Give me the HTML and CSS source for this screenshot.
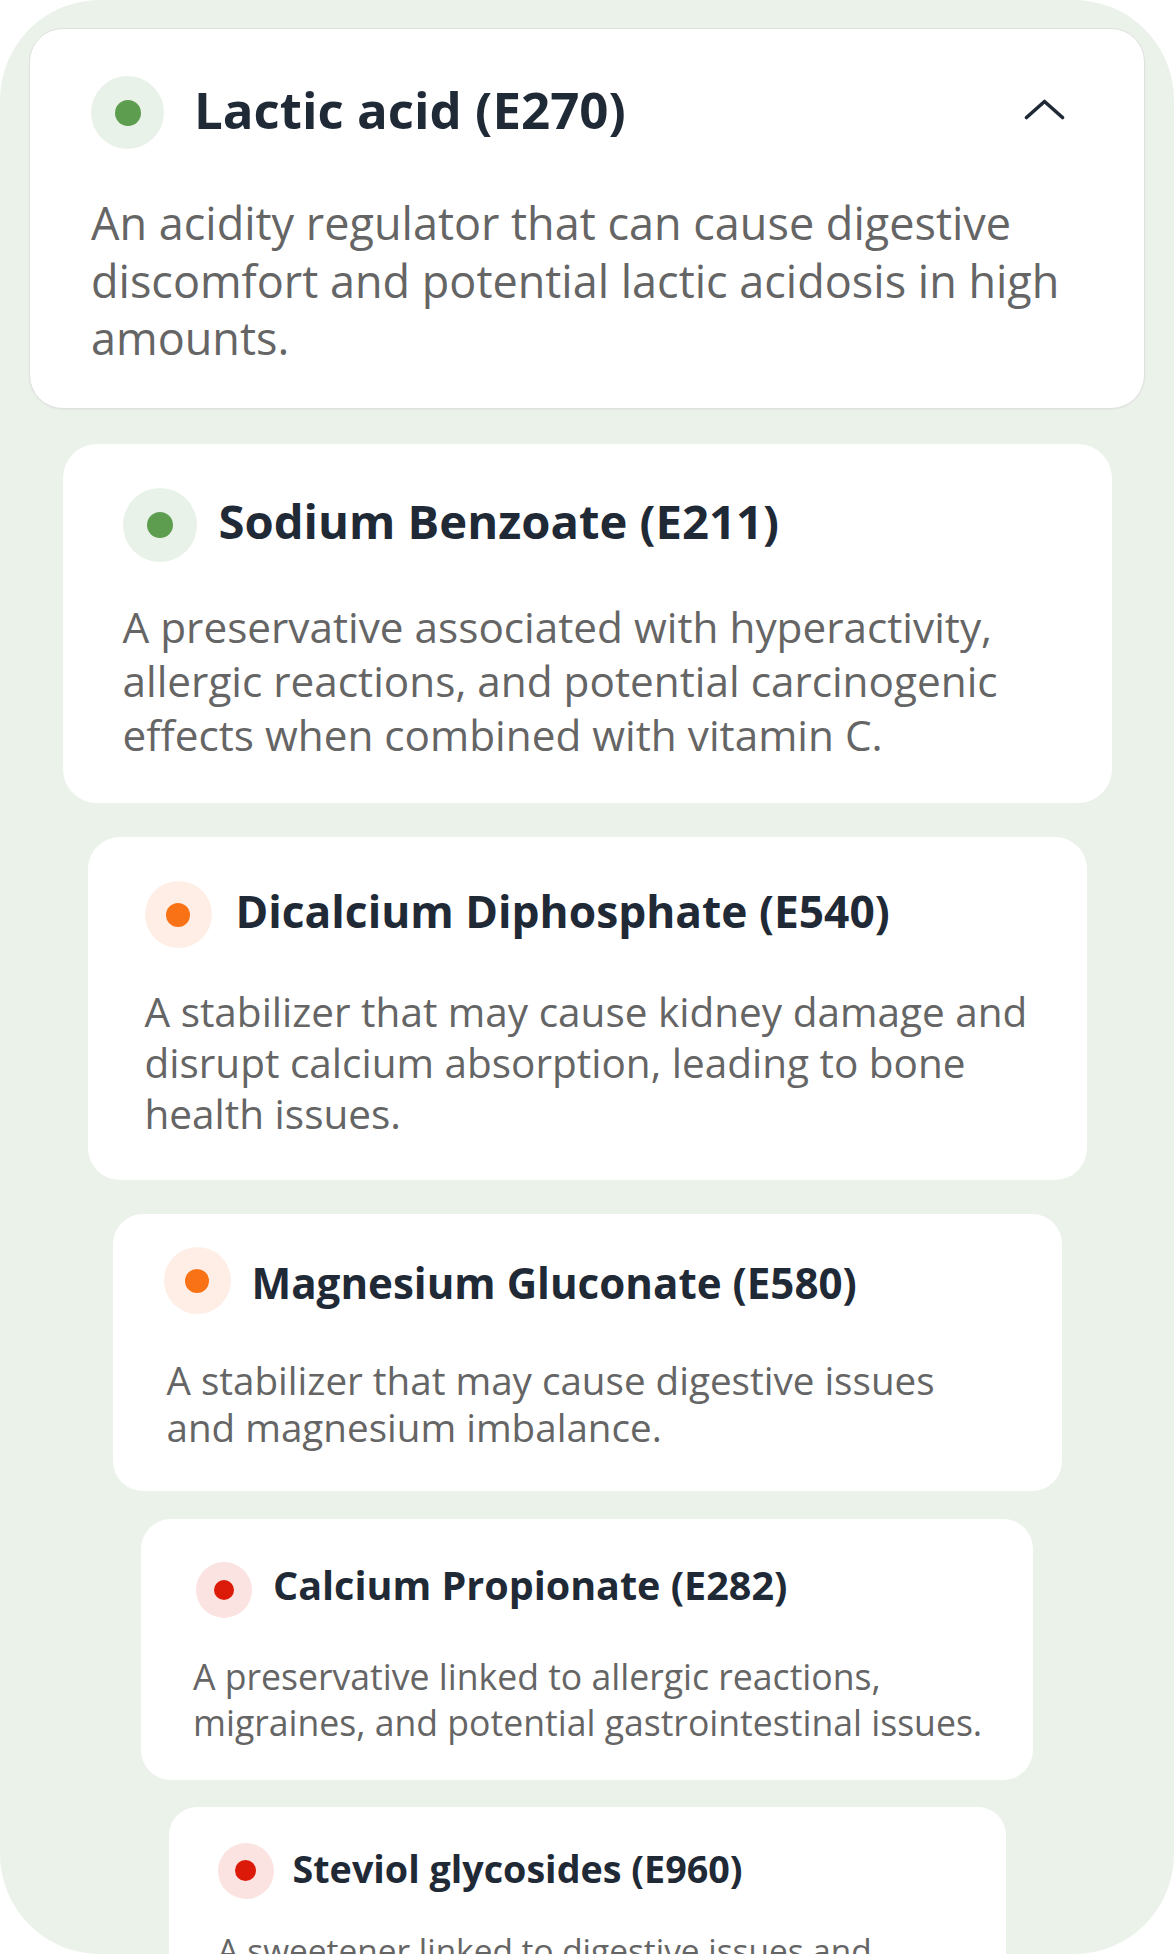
FILE: index.html
```html
<!DOCTYPE html>
<html lang="en">
<head>
<meta charset="utf-8">
<title>Additives</title>
<link rel="stylesheet" href="styles.css">
</head>
<body>
<main class="panel">
  <article class="card card--1 card--open">
    <div class="card__head">
      <span class="dot dot--green"></span>
      <h3 class="card__title">Lactic acid (E270)</h3>
      <svg class="chev" viewBox="0 0 41 21" width="41" height="21" aria-hidden="true"><polyline points="2.5,18.5 20.5,2.5 38.5,18.5" fill="none" stroke="#1f2a36" stroke-width="3.6" stroke-linecap="round" stroke-linejoin="round"/></svg>
    </div>
    <p class="card__desc">An acidity regulator that can cause digestive discomfort and potential lactic acidosis in high amounts.</p>
  </article>

  <article class="card card--2">
    <div class="card__head">
      <span class="dot dot--green"></span>
      <h3 class="card__title">Sodium Benzoate (E211)</h3>
    </div>
    <p class="card__desc">A preservative associated with hyperactivity, allergic reactions, and potential carcinogenic effects when combined with vitamin C.</p>
  </article>

  <article class="card card--3">
    <div class="card__head">
      <span class="dot dot--orange"></span>
      <h3 class="card__title">Dicalcium Diphosphate (E540)</h3>
    </div>
    <p class="card__desc">A stabilizer that may cause kidney damage and disrupt calcium absorption, leading to bone health issues.</p>
  </article>

  <article class="card card--4">
    <div class="card__head">
      <span class="dot dot--orange"></span>
      <h3 class="card__title">Magnesium Gluconate (E580)</h3>
    </div>
    <p class="card__desc">A stabilizer that may cause digestive issues and magnesium imbalance.</p>
  </article>

  <article class="card card--5">
    <div class="card__head">
      <span class="dot dot--red"></span>
      <h3 class="card__title">Calcium Propionate (E282)</h3>
    </div>
    <p class="card__desc">A preservative linked to allergic reactions, migraines, and potential gastrointestinal issues.</p>
  </article>

  <article class="card card--6">
    <div class="card__head">
      <span class="dot dot--red"></span>
      <h3 class="card__title">Steviol glycosides (E960)</h3>
    </div>
    <p class="card__desc">A sweetener linked to digestive issues and potential effects on blood sugar levels.</p>
  </article>
</main>
</body>
</html>
```
FILE: styles.css
```css
html, body {
  margin: 0;
  padding: 0;
  background: #ffffff;
}

body {
  font-family: "Open Sans", "Noto Sans", sans-serif;
}

.panel {
  height: 1954px;
  box-sizing: border-box;
  padding-top: 28px;
  background: #eaf2ea;
  border-radius: 100px;
  overflow: hidden;
  display: flex;
  flex-direction: column;
}

.card {
  box-sizing: border-box;
  flex: none;
  width: var(--w);
  margin: var(--mt) auto 0;
  padding: var(--pt) var(--pr) var(--pb) var(--pl);
  background: #ffffff;
  border-radius: var(--r);
}

.card--open {
  border: 1px solid #e0e0e0;
  box-shadow: 0 1px 2px rgba(0, 0, 0, 0.04);
}

.card__head {
  display: flex;
  align-items: center;
  gap: var(--tgap);
}

.dot {
  flex: none;
  width: var(--icon);
  height: var(--icon);
  margin-left: var(--iml, 0px);
  border-radius: 50%;
  display: flex;
  align-items: center;
  justify-content: center;
}

.dot::after {
  content: "";
  width: var(--dot);
  height: var(--dot);
  border-radius: 50%;
}

.dot--green { background: #e9f2e8; }
.dot--green::after { background: #5d9d4f; }
.dot--orange { background: #ffeee6; }
.dot--orange::after { background: #f97316; }
.dot--red { background: #fbe3e1; }
.dot--red::after { background: #dc1a0a; }

.card__title {
  margin: var(--tmt, 0px) 0 var(--tmb, 0px);
  font-size: var(--tfs);
  line-height: 1.2;
  font-weight: 700;
  color: #1f2a36;
  white-space: nowrap;
}

.chev {
  flex: none;
  margin-left: auto;
  margin-right: 18px;
  margin-bottom: 7px;
}

.card__desc {
  margin: var(--gap) 0 0;
  font-size: var(--dfs);
  line-height: var(--dlh);
  font-weight: 400;
  color: #656565;
}

.card--1 {
  --w: 1116px; --mt: 0px; --r: 34px;
  --pt: 47px; --pb: 41px; --pl: 61px; --pr: 61px;
  --icon: 73px; --dot: 26px; --tgap: 30px; --tfs: 51px; --tmb: 5px;
  --gap: 45px; --dfs: 45px; --dlh: 57.5px;
}

.card--2 {
  --w: 1049px; --mt: 35px; --r: 34px;
  --pt: 44px; --pb: 41px; --pl: 60px; --pr: 59px;
  --icon: 74px; --dot: 26px; --tgap: 22px; --tfs: 47.2px; --tmb: 7px;
  --gap: 38px; --dfs: 42.3px; --dlh: 54px;
}

.card--3 {
  --w: 999px; --mt: 34px; --r: 32px;
  --pt: 44.5px; --pb: 40.5px; --pl: 57px; --pr: 36px;
  --icon: 67px; --dot: 24px; --tgap: 24px; --tfs: 44.3px; --tmb: 6px;
  --gap: 38px; --dfs: 40.5px; --dlh: 51px;
}

.card--4 {
  --w: 949px; --mt: 34px; --r: 30px;
  --pt: 33.5px; --pb: 39px; --pl: 54px; --pr: 95px; --iml: -3px;
  --icon: 67px; --dot: 24px; --tgap: 21px; --tfs: 42.1px; --tmt: 6px;
  --gap: 42.5px; --dfs: 38.6px; --dlh: 47.5px;
}

.card--5 {
  --w: 892px; --mt: 28px; --r: 30px;
  --pt: 43px; --pb: 35px; --pl: 52px; --pr: 28px; --iml: 3px;
  --icon: 56px; --dot: 20px; --tgap: 21px; --tfs: 39.5px; --tmb: 10px;
  --gap: 34px; --dfs: 35.6px; --dlh: 46px;
}

.card--6 {
  --w: 837px; --mt: 27px; --r: 28px;
  --pt: 36px; --pb: 40px; --pl: 49px; --pr: 100px;
  --icon: 56px; --dot: 21px; --tgap: 19px; --tfs: 37.7px; --tmb: 5px;
  --gap: 29px; --dfs: 33.4px; --dlh: 44px;
}
```
